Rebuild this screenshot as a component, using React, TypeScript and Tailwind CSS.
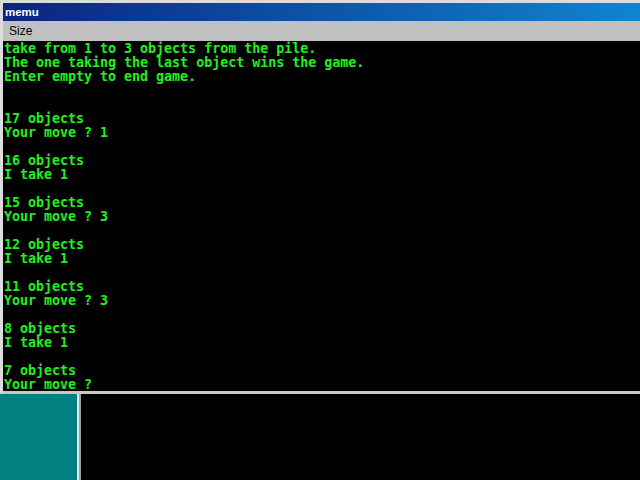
const lines = [
  'take from 1 to 3 objects from the pile.',
  'The one taking the last object wins the game.',
  'Enter empty to end game.',
  '',
  '',
  '17 objects',
  'Your move ? 1',
  '',
  '16 objects',
  'I take 1',
  '',
  '15 objects',
  'Your move ? 3',
  '',
  '12 objects',
  'I take 1',
  '',
  '11 objects',
  'Your move ? 3',
  '',
  '8 objects',
  'I take 1',
  '',
  '7 objects',
  'Your move ?',
];

const App = () => {
  return (
    <div className="w-[640px] h-[480px] flex flex-col bg-black overflow-hidden">
      {/* console window */}
      <div className="flex flex-col border-t-[3px] border-l-[3px] border-b-[3px] border-t-[#dcdcdc] border-l-[#dcdcdc] border-b-[#c8c8c8]">
        <div className="h-[18px] flex items-center pl-[2px] pt-[2px] bg-[linear-gradient(to_right,#0a2480,#1084d0)]">
          <span className="text-white font-bold text-[11.5px] font-['Liberation_Sans',Arial,sans-serif]">memu</span>
        </div>
        <div className="h-[20px] flex items-center pl-[6px] bg-[#c0c0c0]">
          <span className="text-black text-[12px] font-['Liberation_Sans',Arial,sans-serif]">Size</span>
        </div>
        <div className="h-[350px] bg-black pl-[1px] pt-[1px] font-['DejaVu_Sans_Mono','Liberation_Mono',monospace] font-bold text-[13.3px] leading-[14px] text-[#20f020]">
          {lines.map((line, i) => (
            <div key={i} className="whitespace-pre h-[14px]">
              {line || ' '}
            </div>
          ))}
        </div>
      </div>
      {/* desktop below */}
      <div className="flex flex-1">
        <div className="w-[77px] bg-[#008080]" />
        <div className="w-[2px] bg-[#e8e8e8]" />
        <div className="w-[2px] bg-[#a0a0a0]" />
        <div className="flex-1 bg-black" />
      </div>
    </div>
  );
};

export default App;
